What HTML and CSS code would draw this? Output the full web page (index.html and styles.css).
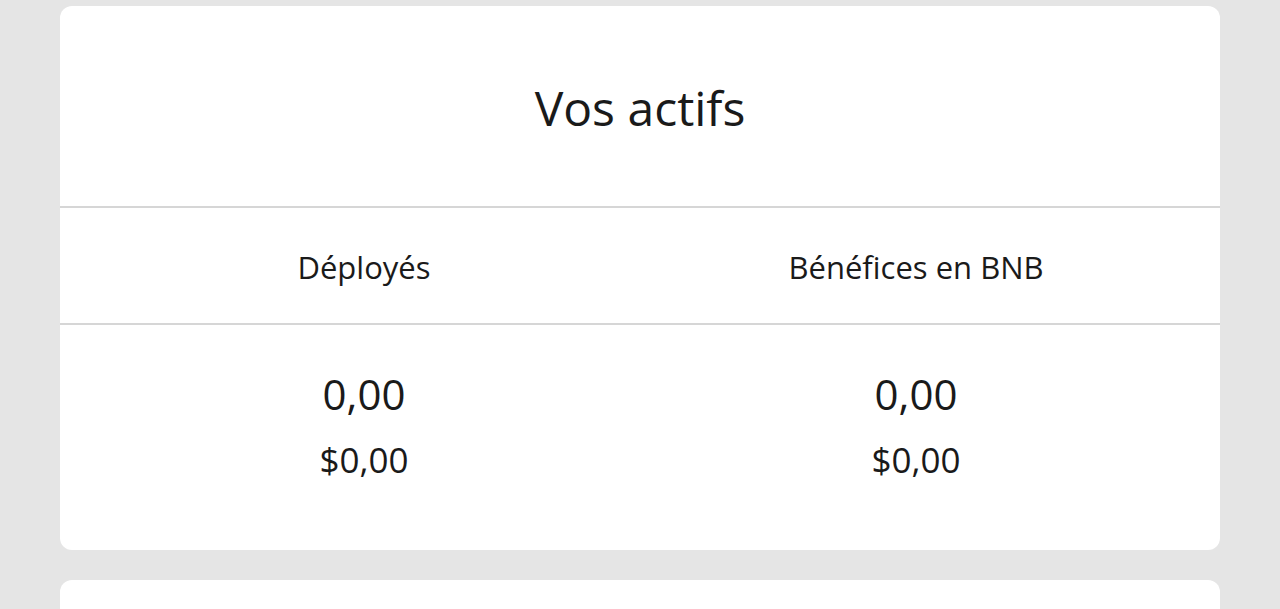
FILE: index.html
```html
<!DOCTYPE html>
<html lang="fr">
<head>
<meta charset="utf-8">
<title>Vos actifs</title>
<link rel="stylesheet" href="styles.css">
</head>
<body>
<main class="page">
  <section class="card">
    <header class="card-head">
      <h1 class="title">Vos actifs</h1>
    </header>
    <div class="row labels">
      <div class="cell">Déployés</div>
      <div class="cell">Bénéfices en BNB</div>
    </div>
    <div class="row values">
      <div class="cell">
        <div class="amount">0,00</div>
        <div class="usd">$0,00</div>
      </div>
      <div class="cell">
        <div class="amount">0,00</div>
        <div class="usd">$0,00</div>
      </div>
    </div>
  </section>
  <section class="card next"></section>
</main>
</body>
</html>
```

FILE: styles.css
```css
html, body {
  margin: 0;
  padding: 0;
  background: #e5e5e5;
}
body {
  font-family: "Open Sans", "Noto Sans", sans-serif;
  color: #1a1a1a;
}
.page {
  box-sizing: border-box;
  height: 609px;
  overflow: hidden;
  padding: 6px 60px 0;
  display: flex;
  flex-direction: column;
  gap: 30px;
}
.card {
  background: #fff;
  border-radius: 12px;
  flex-shrink: 0;
}
.card-head {
  height: 200px;
  display: flex;
  align-items: center;
  justify-content: center;
  border-bottom: 2px solid #d6d6d6;
}
.title {
  margin: 0;
  font-weight: 400;
  font-size: 48px;
  line-height: 1;
  padding-top: 4px;
}
.row {
  display: grid;
  grid-template-columns: 1fr 1fr;
  padding: 0 28px;
}
.labels {
  height: 115px;
  align-items: center;
  border-bottom: 2px solid #d6d6d6;
  font-size: 31px;
}
.labels .cell {
  text-align: center;
  padding-top: 2px;
}
.values {
  height: 225px;
}
.values .cell {
  display: flex;
  flex-direction: column;
  align-items: center;
  padding-top: 44px;
}
.amount {
  font-size: 42px;
  line-height: 50px;
}
.usd {
  font-size: 35px;
  line-height: 40px;
  margin-top: 21px;
}
.next {
  height: 120px;
}
```
